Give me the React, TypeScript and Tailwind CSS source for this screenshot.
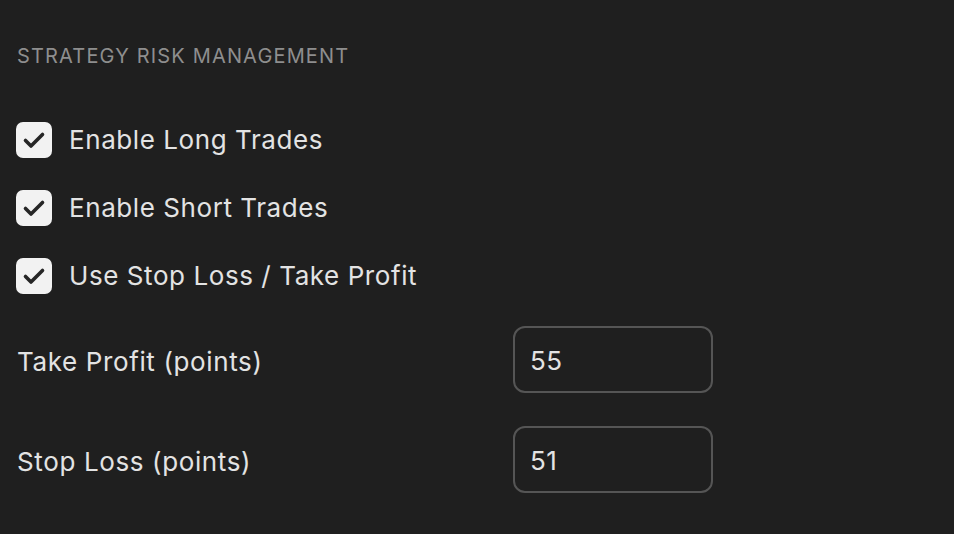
import { useState } from "react";

const toggles = [
  { id: "long", label: "Enable Long Trades" },
  { id: "short", label: "Enable Short Trades" },
  { id: "sltp", label: "Use Stop Loss / Take Profit" },
];

function Check({ on, onClick }: { on: boolean; onClick: () => void }) {
  return (
    <button
      onClick={onClick}
      className={`w-9 h-9 rounded-[7px] flex items-center justify-center shrink-0 ${on ? "bg-[#f2f2f2]" : "border-2 border-[#5a5a5a]"}`}
    >
      {on && (
        <svg width="36" height="36" viewBox="0 0 36 36">
          <path
            d="M9.5 18.5 L15 24 L26.5 12.5"
            fill="none"
            stroke="#262626"
            strokeWidth="3.6"
            strokeLinecap="round"
            strokeLinejoin="round"
          />
        </svg>
      )}
    </button>
  );
}

export default function App() {
  const [checked, setChecked] = useState<Record<string, boolean>>({ long: true, short: true, sltp: true });
  const [takeProfit, setTakeProfit] = useState("55");
  const [stopLoss, setStopLoss] = useState("51");

  return (
    <div
      className="min-h-screen bg-[#1f1f1f] px-4 pt-[44px] text-[#e3e3e3]"
      style={{ fontFamily: "Inter, 'Noto Sans', sans-serif" }}
    >
      <h2 className="text-[20px] leading-[24px] tracking-[0.058em] text-[#8e8e8e] pl-px">
        STRATEGY RISK MANAGEMENT
      </h2>

      <div className="mt-[54px] flex flex-col gap-8">
        {toggles.map((t) => (
          <label key={t.id} className="flex items-center gap-[17px] h-9">
            <Check
              on={checked[t.id]}
              onClick={() => setChecked({ ...checked, [t.id]: !checked[t.id] })}
            />
            <span className="text-[26px] leading-none tracking-[0.022em]">{t.label}</span>
          </label>
        ))}
      </div>

      <div className="mt-8 flex flex-col gap-[33px]">
        <div className="flex items-center">
          <span className="w-[497px] text-[26px] pl-px pt-[3px] tracking-[0.024em]">Take Profit (points)</span>
          <input
            value={takeProfit}
            onChange={(e) => setTakeProfit(e.target.value)}
            className="w-[200px] h-[67px] rounded-[12px] border-2 border-[#555555] bg-transparent px-[15px] pt-[2px] text-[26px] tracking-[0.02em] text-[#e3e3e3] outline-none"
          />
        </div>
        <div className="flex items-center">
          <span className="w-[497px] text-[26px] pl-px pt-[3px] tracking-[0.024em]">Stop Loss (points)</span>
          <input
            value={stopLoss}
            onChange={(e) => setStopLoss(e.target.value)}
            className="w-[200px] h-[67px] rounded-[12px] border-2 border-[#555555] bg-transparent px-[15px] pt-[2px] text-[26px] tracking-[0.02em] text-[#e3e3e3] outline-none"
          />
        </div>
      </div>
    </div>
  );
}
